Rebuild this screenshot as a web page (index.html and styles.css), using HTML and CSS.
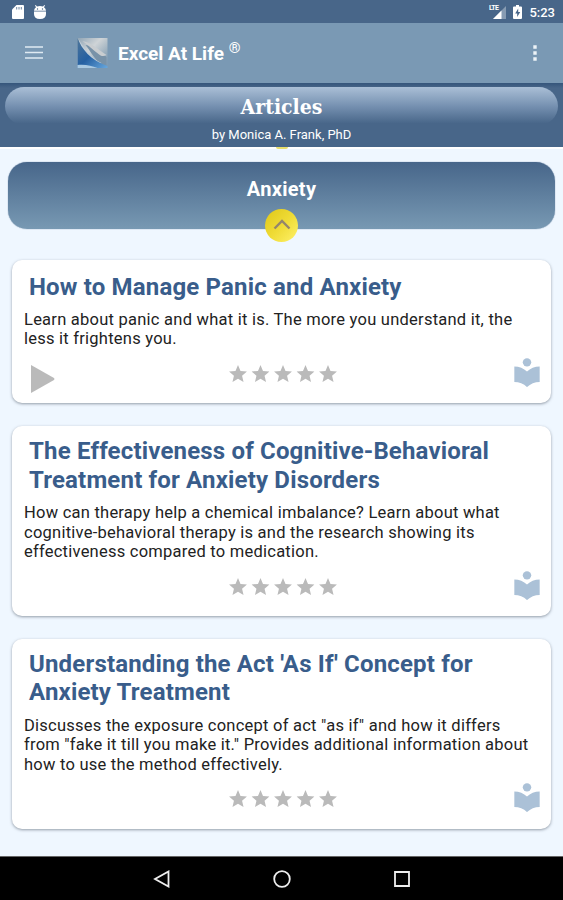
FILE: index.html
```html
<!DOCTYPE html>
<html lang="en">
<head>
<meta charset="utf-8">
<title>Excel At Life</title>
<link rel="stylesheet" href="styles.css">
</head>
<body>
<svg class="defs" aria-hidden="true">
  <symbol id="star" viewBox="2 2 20 19"><path d="M12 17.27 18.18 21l-1.64-7.03L22 9.24l-7.19-.61L12 2 9.19 8.63 2 9.24l5.46 4.73L5.82 21z"/></symbol>
  <symbol id="stars" viewBox="0 0 108 17">
    <use href="#star" x="0" width="18" height="17"/><use href="#star" x="22.5" width="18" height="17"/><use href="#star" x="45" width="18" height="17"/><use href="#star" x="67.500" width="18" height="17"/><use href="#star" x="90" width="18" height="17"/>
  </symbol>
  <symbol id="reader" viewBox="3 1 18 20.600"><path d="M12 11.550C9.640 9.350 6.480 8 3 8v11c3.480 0 6.640 1.350 9 3.550 2.360-2.190 5.520-3.550 9-3.550V8c-3.480 0-6.640 1.350-9 3.550z" transform="translate(0 -.9)"/><circle cx="12" cy="4.100" r="3"/></symbol>
</svg>
<div class="screen">
  <div class="status">
    <svg class="sd" viewBox="0 0 12 14"><path d="M4.500 0H11q1 0 1 1v12q0 1-1 1H1q-1 0-1-1V4.500z"/><path class="cut" d="M4.700 2v2.500M7 2v2.500M9.300 2v2.500"/></svg>
    <svg class="bug" viewBox="0 0 12 14"><path d="M0 6.500h12V9q0 5-6 5T0 9zM0 5.700Q.2 3.500 2 2.200L1 .6l.7-.5L3 1.600q3-1 6 0L10.300.1l.7.5-1 1.600q1.800 1.300 2 3.500z"/><circle class="eye" cx="3.500" cy="4" r=".7"/><circle class="eye" cx="8.500" cy="4" r=".7"/></svg>
    <span class="grow"></span>
    <span class="lte">LTE</span>
    <svg class="signal" viewBox="0 0 13 13"><path d="M13 0v13H0z" opacity=".35"/><path d="M8.500 4.500V13H0z"/></svg>
    <svg class="battery" viewBox="0 0 9 14"><path d="M3 0h3v1.500h2q1 0 1 1V13q0 1-1 1H1q-1 0-1-1V2.500q0-1 1-1h2z"/><path class="bolt" d="M5.200 3.500 2.200 8.500h2V12l3-5H5.200z"/></svg>
    <span class="clock">5:23</span>
  </div>
  <header class="appbar">
    <svg class="menu" viewBox="0 0 18 13"><path d="M0 1h18M0 6.500h18M0 12h18"/></svg>
    <svg class="logo" viewBox="0 0 32 32">
      <defs>
        <linearGradient id="silver" x1="0" y1="0" x2="1" y2="1"><stop offset="0" stop-color="#8fa4b5"/><stop offset=".4" stop-color="#cfd4d7"/><stop offset=".75" stop-color="#93a9ba"/><stop offset="1" stop-color="#7a99b4"/></linearGradient>
        <linearGradient id="blue" x1="0" y1="0" x2="1" y2="1"><stop offset="0" stop-color="#4f7699"/><stop offset=".5" stop-color="#2560a2"/><stop offset="1" stop-color="#68a8de"/></linearGradient>
        <filter id="soft"><feGaussianBlur stdDeviation=".7"/></filter>
      </defs>
      <path fill="url(#silver)" d="M1 1h30v30H1z"/>
      <g filter="url(#soft)">
        <path fill="#7892a8" d="M9 8c10 1 14 6 21 12v9C19 26 15 15 9 8z"/>
        <path fill="#c9cdd0" d="M6 4c10 2 16 9 24 14-3 2-6 1-8-1C16 13 12 8 6 4z"/>
        <path fill="#c1cfda" d="M2 2c6 10 12 19 23 24l-4 1C12 23 5 13 2 2z"/>
      </g>
      <path fill="url(#blue)" d="M1 1c4 11 13 22 30 28v2H1z"/>
      <path fill="#a9c9e2" d="M1 28c8-1 14 1 20 3H1z"/>
    </svg>
    <h1>Excel At Life <span class="reg">®</span></h1>
    <svg class="more" viewBox="0 0 4 16"><path d="M.3 .3h3.400v3.400H.3zM.3 6.300h3.400v3.400H.3zM.3 12.300h3.400v3.400H.3z"/></svg>
  </header>
  <section class="heading">
    <h2>Articles</h2>
    <p>by Monica A. Frank, PhD</p>
    <i class="peek"></i>
  </section>
  <main>
    <section class="category">
      <h2>Anxiety</h2>
      <span class="collapse"><svg viewBox="0 0 18 12"><path d="M1.500 10.500 9 3l7.500 7.500"/></svg></span>
    </section>
    <article class="card">
      <h3>How to Manage Panic and Anxiety</h3>
      <p>Learn about panic and what it is. The more you understand it, the<br>less it frightens you.</p>
      <div class="actions"><svg class="play" viewBox="0 0 25 30"><path d="M1 1v28l23-13q1-1 0-2z"/></svg><svg class="stars"><use href="#stars"/></svg><svg class="reader"><use href="#reader"/></svg></div>
    </article>
    <article class="card tall">
      <h3>The Effectiveness of Cognitive-Behavioral<br>Treatment for Anxiety Disorders</h3>
      <p>How can therapy help a chemical imbalance? Learn about what<br>cognitive-behavioral therapy is and the research showing its<br>effectiveness compared to medication.</p>
      <div class="actions"><span></span><svg class="stars"><use href="#stars"/></svg><svg class="reader"><use href="#reader"/></svg></div>
    </article>
    <article class="card tall">
      <h3>Understanding the Act 'As If' Concept for<br>Anxiety Treatment</h3>
      <p>Discusses the exposure concept of act "as if" and how it differs<br>from "fake it till you make it." Provides additional information about<br>how to use the method effectively.</p>
      <div class="actions"><span></span><svg class="stars"><use href="#stars"/></svg><svg class="reader"><use href="#reader"/></svg></div>
    </article>
  </main>
  <nav>
    <svg viewBox="0 0 18 18"><path d="M15.500 1.500v15L2 9z"/></svg>
    <svg viewBox="0 0 18 18"><circle cx="9" cy="9" r="7.800"/></svg>
    <svg viewBox="0 0 18 18"><path d="M2 2h14v14H2z"/></svg>
  </nav>
</div>
</body>
</html>
```
FILE: styles.css
```css
* { box-sizing: border-box; }
body { margin: 0; font-family: Roboto, "Liberation Sans", sans-serif; background: #eff7ff; }
h1, h2, h3, p { margin: 0; }
svg { display: block; flex: none; }
.defs { position: absolute; width: 0; height: 0; }
.screen { width: 563px; height: 900px; display: flex; flex-direction: column; overflow: hidden; }

.status { height: 23px; flex: none; background: #486689; display: flex; align-items: center; padding: 0 8px 0 12px; color: #fff; fill: #fff; }
.sd { width: 12px; height: 14px; margin-right: 10px; }
.cut { stroke: #486689; stroke-width: .8; }
.bug { width: 12px; height: 14px; }
.eye, .bolt { fill: #486689; }
.grow { flex: 1; }
.lte { font-size: 7px; font-weight: 700; line-height: 8px; align-self: flex-start; margin: 4px -5px 0 0; letter-spacing: -.6px; }
.signal { width: 13px; height: 13px; margin: 1px 7px 0 0; }
.battery { width: 9px; height: 14px; margin-right: 7px; }
.clock { font-size: 13px; font-weight: 500; margin-top: 2px; }

.appbar { height: 60px; flex: none; background: #7a99b4; display: flex; align-items: center; padding: 0 26px 0 25px; color: #fff; }
.menu { width: 18px; height: 13px; stroke: #dfeaf2; stroke-width: 1.600; margin: -1px 33px 0 0; }
.logo { width: 33px; height: 32px; margin-right: 9px; }
h1 { font-size: 19px; font-weight: 700; flex: 1; line-height: 22px; padding-top: 2px; }
.reg { font-size: 15px; font-weight: 400; vertical-align: 7px; line-height: 0; }
.more { width: 4px; height: 16px; fill: #edf3f7; }

.heading { position: relative; height: 66px; flex: none; padding: 4px 5px 0; background: linear-gradient(#35557b, #486689 5px); border-bottom: 2px solid #fff; text-align: center; color: #fff; }
.heading h2 { height: 38px; border-radius: 19px; background: linear-gradient(#aabfd6, #7691b1 50%, #486689 96%); font: 700 21px/39px "DejaVu Serif Condensed", "DejaVu Serif", serif; }
.heading p { font-size: 13px; line-height: 16px; margin-top: 2px; }
.peek { position: absolute; left: 276px; top: 64px; width: 12px; height: 2px; background: #e9df6d; border-radius: 0 0 6px 6px; }

main { flex: 1; padding: 13px 12px 0; }
.category { height: 67px; margin: 0 -4px 31px; border-radius: 19px; background: linear-gradient(#47668a, #7899b3); display: flex; flex-direction: column; align-items: center; color: #fff; box-shadow: 0 0 1px #47668a; }
.category h2 { font-size: 20px; line-height: 24px; letter-spacing: .3px; margin: 15px 0 8px; }
.collapse { width: 33px; height: 33px; flex: none; border-radius: 50%; background: linear-gradient(135deg, #dfc719, #efdb35 50%, #fff26a); display: grid; place-items: center; }
.collapse svg { width: 18px; height: 12px; fill: none; stroke: #94866c; stroke-width: 2.400; margin-top: -3px; }

.card { width: 539px; height: 143px; background: #fff; border-radius: 10px; padding: 13px 11px 0 12px; margin-bottom: 23px; box-shadow: 0 1px 3px rgba(70, 80, 95, .55); }
.card.tall { height: 190px; margin-bottom: 22.500px; padding-top: 11px; }
.card h3 { font-size: 24px; line-height: 28.500px; font-weight: 700; letter-spacing: .17px; white-space: nowrap; color: #395d8b; padding-left: 5px; }
.card p { font-size: 16.500px; line-height: 19.600px; letter-spacing: .24px; color: #222; margin-top: 8px; white-space: nowrap; }
.card.tall p { margin-top: 9px; }
.actions { display: grid; grid-template-columns: 1fr 108px 1fr; align-items: start; margin: 9px -1px 0 0; }
.play { width: 25px; height: 30px; margin: 6px 0 0 6px; fill: #bababa; }
.stars { width: 108px; height: 17px; margin-top: 7px; fill: #bababa; }
.reader { width: 26px; height: 29px; fill: #abc1d7; justify-self: end; margin-right: 1px; }

nav { height: 44px; flex: none; background: #000; border-top: 1px solid #666; display: flex; justify-content: center; align-items: center; gap: 102px; }
nav svg { width: 18px; height: 18px; fill: none; stroke: #eee; stroke-width: 1.800; }
```
